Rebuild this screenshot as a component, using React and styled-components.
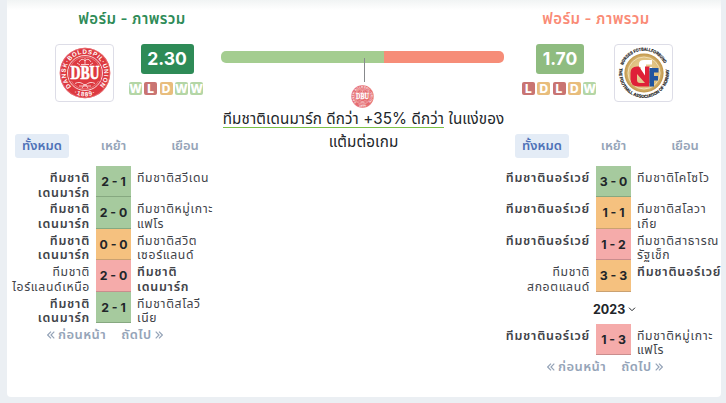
import styled, { createGlobalStyle } from "styled-components";

const results = {
  W: "#b4d6a6",
  L: "#c97472",
  D: "#e8bd7d",
};

const scores = {
  W: ["#a6ca9e", "#86a880"],
  D: ["#f5c17f", "#caa171"],
  L: ["#f5abaa", "#c98d8d"],
};

const denmarkGames = [
  { home: ["ทีมชาติ", "เดนมาร์ก"], away: ["ทีมชาติสวีเดน"], score: "2 - 1", result: "W", own: "home" },
  { home: ["ทีมชาติ", "เดนมาร์ก"], away: ["ทีมชาติหมู่เกาะ", "แฟโร"], score: "2 - 0", result: "W", own: "home" },
  { home: ["ทีมชาติ", "เดนมาร์ก"], away: ["ทีมชาติสวิต", "เซอร์แลนด์"], score: "0 - 0", result: "D", own: "home" },
  { home: ["ทีมชาติ", "ไอร์แลนด์เหนือ"], away: ["ทีมชาติ", "เดนมาร์ก"], score: "2 - 0", result: "L", own: "away" },
  { home: ["ทีมชาติ", "เดนมาร์ก"], away: ["ทีมชาติสโลวี", "เนีย"], score: "2 - 1", result: "W", own: "home" },
];

const norwayGames = [
  { home: ["ทีมชาตินอร์เวย์"], away: ["ทีมชาติโคโซโว"], score: "3 - 0", result: "W", own: "home" },
  { home: ["ทีมชาตินอร์เวย์"], away: ["ทีมชาติสโลวา", "เกีย"], score: "1 - 1", result: "D", own: "home" },
  { home: ["ทีมชาตินอร์เวย์"], away: ["ทีมชาติสาธารณ", "รัฐเช็ก"], score: "1 - 2", result: "L", own: "home" },
  { home: ["ทีมชาติ", "สกอตแลนด์"], away: ["ทีมชาตินอร์เวย์"], score: "3 - 3", result: "D", own: "away" },
];

const norwayOlder = [
  { home: ["ทีมชาตินอร์เวย์"], away: ["ทีมชาติหมู่เกาะ", "แฟโร"], score: "1 - 3", result: "L", own: "home" },
];

const DenmarkCrest = ({ size, faded }) => (
  <svg width={size} height={size} viewBox="0 0 52 52" opacity={faded ? 0.75 : 1}>
    <defs>
      <path id="dbuTop" d="M12.350 39.650 A19.300 19.300 0 1 1 39.650 39.650" />
      <path id="dbuBottom" d="M9.500 42.500 A23.300 23.300 0 0 0 42.500 42.500" />
    </defs>
    <circle cx="26" cy="26" r="25.3" fill="#dd3940" />
    <circle cx="26" cy="26" r="24.8" fill="none" stroke="#f09da0" strokeWidth="0.5" />
    <circle cx="26" cy="26" r="17.500" fill="none" stroke="#fff" strokeWidth="0.8" />
    <circle cx="26" cy="26" r="16" fill="none" stroke="#f09da0" strokeWidth="0.6" />
    <g fill="#fff" fontFamily="Liberation Sans, sans-serif" fontWeight="700" fontSize="6.2">
      <text>
        <textPath href="#dbuTop" textLength="89" lengthAdjust="spacing">
          DANSK·BOLDSPIL·UNION
        </textPath>
      </text>
      <text textAnchor="middle" letterSpacing="0.8">
        <textPath href="#dbuBottom" startOffset="50%">·1889·</textPath>
      </text>
    </g>
    <path
      d="M20 15 q3 -5 6 -1 q3 -4 6 1 M22 17.500 h8 M18 16 l3 2 M34 16 l-3 2 M26 11 v6 M16 36.500 q5 -3 10 2 q5 -5 10 -2 M20 39 h12 M23 41 l3 -4 l3 4"
      fill="none"
      stroke="#fbd5d6"
      strokeWidth="0.9"
    />
    <path d="M10.500 19 h31 v15 h-31 z" fill="#dd3940" />
    <text
      x="26"
      y="31.8"
      textAnchor="middle"
      textLength="29"
      lengthAdjust="spacingAndGlyphs"
      fontFamily="Liberation Serif, serif"
      fontWeight="700"
      fontSize="18"
      fill="#fff"
      stroke="#fff"
      strokeWidth="0.7"
    >
      DBU
    </text>
  </svg>
);

const NorwayCrest = () => (
  <svg width="54" height="54" viewBox="0 0 54 54">
    <defs>
      <radialGradient id="gold">
        <stop offset="0" stopColor="#ecd7a5" />
        <stop offset="0.75" stopColor="#dfc17f" />
        <stop offset="1" stopColor="#c09549" />
      </radialGradient>
      <path id="nffTop" d="M6.100 19.200 A22.300 22.300 0 0 1 47.900 19.200" />
      <path id="nffBottom" d="M2.600 22 A24.900 24.900 0 1 0 51.400 22" />
    </defs>
    <circle cx="27" cy="27" r="19.6" fill="url(#gold)" />
    <circle cx="27" cy="27" r="16" fill="none" stroke="#f1e0b8" strokeWidth="1" />
    <g fill="#1c1c1c" stroke="#1c1c1c" strokeWidth="0.2" fontFamily="Liberation Sans, sans-serif" fontWeight="700" fontSize="4.4">
      <text>
        <textPath href="#nffTop" textLength="52" lengthAdjust="spacingAndGlyphs">
          NORGES FOTBALLFORBUND
        </textPath>
      </text>
      <text>
        <textPath href="#nffBottom" textLength="87" lengthAdjust="spacingAndGlyphs">
          THE FOOTBALL ASSOCIATION OF NORWAY
        </textPath>
      </text>
    </g>
    <path d="M24 29 V21 h-2 v-3 q0 -4 5 -4 h8 v4.500 h-6 v2.500 h6 v4 h-6 v5z" fill="#fff" />
    <path
      d="M20 20.500 q-6.500 0 -6.500 6.500 v6 q0 7.500 8 7.500 h10.500 v-3.500 h-9 q-3 0 -3 -3 v-6 l8 9 h4.500 v-16.500 h-4.500 v9 l-6 -9z"
      fill="#df2038"
    />
    <path d="M32.500 40.500 V22 h9 v4.500 h-4.500 v3.500 h4 v4.500 h-4 v6z" fill="#21559f" />
  </svg>
);

const Chevrons = ({ right }) => (
  <svg width="8" height="8" viewBox="0 0 8 8" fill="none" stroke="currentColor" strokeWidth="1.2">
    {right ? <path d="M.7 .7 L4 4 L.7 7.300 M4 .7 L7.300 4 L4 7.300" /> : <path d="M4 .7 L.7 4 L4 7.300 M7.300 .7 L4 4 L7.300 7.300" />}
  </svg>
);

const Form = ({ items }) => (
  <FormList>
    {items.split("").map((item, i) => (
      <FormBadge key={i} $result={item}>
        {item}
      </FormBadge>
    ))}
  </FormList>
);

const Tabs = () => (
  <TabList>
    <Tab $active>ทั้งหมด</Tab>
    <Tab>เหย้า</Tab>
    <Tab>เยือน</Tab>
  </TabList>
);

const Team = ({ lines, home, own }) => (
  <TeamName $home={home} $own={own}>
    {lines.map((line) => (
      <span key={line}>{line}</span>
    ))}
  </TeamName>
);

const Games = ({ games }) =>
  games.map((game, i) => (
    <Game key={i}>
      <Team lines={game.home} home own={game.own === "home"} />
      <Score $result={game.result}>{game.score}</Score>
      <Team lines={game.away} own={game.own === "away"} />
    </Game>
  ));

const Pager = () => (
  <PagerRow>
    <PageLink>
      <Chevrons />
      ก่อนหน้า
    </PageLink>
    <PageLink>
      ถัดไป
      <Chevrons right />
    </PageLink>
  </PagerRow>
);

const App = () => {
  return (
    <>
      <GlobalStyle />
      <Card>
        <Side>
          <Title $color="#2e8b57">ฟอร์ม - ภาพรวม</Title>
          <Summary $left="40px">
            <Crest>
              <DenmarkCrest size={52} />
            </Crest>
            <Rating>
              <Points $color="#2e8b57" $width="53px">
                2.30
              </Points>
              <Form items="WLDWW" />
            </Rating>
          </Summary>
          <Tabs />
          <Games games={denmarkGames} />
          <Pager />
        </Side>
        <Comparison>
          <Bar>
            <Marker />
          </Bar>
          <DenmarkCrest size={23} faded />
          <Verdict>
            <p>
              <u>ทีมชาติเดนมาร์ก ดีกว่า +35% ดีกว่า</u> ในแง่ของ
            </p>
            <p>แต้มต่อเกม</p>
          </Verdict>
        </Comparison>
        <Side>
          <Title $color="#fa8b76">ฟอร์ม - ภาพรวม</Title>
          <Summary $left="7px">
            <Rating>
              <Points $color="#8fbc80" $width="48px">
                1.70
              </Points>
              <Form items="LDLDW" />
            </Rating>
            <Crest>
              <NorwayCrest />
            </Crest>
          </Summary>
          <Tabs />
          <Games games={norwayGames} />
          <Season>
            2023
            <svg width="8" height="5" viewBox="0 0 8 5" fill="none" stroke="currentColor">
              <path d="M1 .7 L4 3.700 L7 .7" />
            </svg>
          </Season>
          <Games games={norwayOlder} />
          <Pager />
        </Side>
      </Card>
    </>
  );
};

export default App;

const GlobalStyle = createGlobalStyle`
  * {
    box-sizing: border-box;
  }

  body {
    margin: 0;
    height: 403px;
    overflow: hidden;
    background: #ebeff3;
    font-family: Inter, "Noto Sans Thai", "Noto Sans", "Liberation Sans", sans-serif;
    color: #212529;
  }

  p {
    margin: 0;
  }
`;

const Card = styled.main`
  width: 714px;
  height: 397px;
  margin-left: 7px;
  padding-left: 8px;
  display: grid;
  grid-template-columns: 200px 283px 206px;
  column-gap: 6px;
  background: linear-gradient(#f1f4f4, #fff 10px);
  border-radius: 0 0 4px 4px;

  > :last-child {
    margin-left: 5px;
  }
`;

const Side = styled.section`
  min-width: 0;
`;

const Title = styled.h2`
  width: 234px;
  height: 44px;
  margin: 0;
  line-height: 38px;
  text-align: center;
  font-size: 15px;
  font-weight: 600;
  letter-spacing: 0.4px;
  color: ${({ $color }) => $color};

  ${Side}:last-child & {
    width: 162px;
  }
`;

const Summary = styled.div`
  height: 90px;
  padding-left: ${({ $left }) => $left};
  display: flex;
  align-items: flex-start;
  gap: 15px;

  ${Side}:last-child & {
    gap: 18px;
  }
`;

const Crest = styled.div`
  width: 59px;
  height: 58px;
  display: flex;
  align-items: center;
  justify-content: center;
  border: 1px solid #dddde7;
  border-radius: 4px;
`;

const Rating = styled.div`
  width: 74px;
  display: flex;
  flex-direction: column;
  align-items: center;
  gap: 8px;
`;

const Points = styled.div`
  width: ${({ $width }) => $width};
  height: 30px;
  margin-left: 2px;
  line-height: 30px;
  border-radius: 3px;
  text-align: center;
  font-size: 17.500px;
  font-weight: 700;
  color: #fff;
  background: ${({ $color }) => $color};
`;

const FormList = styled.div`
  display: flex;
  gap: 2.250px;
`;

const FormBadge = styled.span`
  width: 13px;
  height: 13px;
  display: flex;
  align-items: center;
  justify-content: center;
  border-radius: 2px;
  font-size: 12px;
  font-weight: 800;
  color: #fff;
  background: ${({ $result }) => results[$result]};
`;

const TabList = styled.nav`
  height: 32px;
  display: grid;
  grid-template-columns: 54px 89px 54px;
`;

const Tab = styled.a`
  height: 24px;
  line-height: 22px;
  border-radius: 3px;
  text-align: center;
  font-size: 13px;
  font-weight: 600;
  white-space: nowrap;
  color: ${({ $active }) => ($active ? "#4f72b8" : "#95a4b8")};
  background: ${({ $active }) => ($active ? "#e4ecf6" : "none")};
`;

const Game = styled.div`
  height: 31.400px;
  display: grid;
  grid-template-columns: 75px 35px 84px;
  grid-template-rows: 100%;
  column-gap: 6px;
`;

const TeamName = styled.div`
  padding-top: 5px;
  display: flex;
  flex-direction: column;
  align-items: ${({ $home }) => ($home ? "flex-end" : "flex-start")};
  line-height: 14.500px;
  font-size: ${({ $own }) => ($own ? "12.5px" : "12.2px")};
  font-weight: ${({ $own }) => ($own ? 600 : 400)};
  letter-spacing: ${({ $own }) => ($own ? "0.75px" : "0.65px")};
  white-space: nowrap;
  color: #414349;
`;

const Score = styled.div`
  height: 100%;
  line-height: 31px;
  text-align: center;
  font-size: 12.250px;
  font-weight: 700;
  white-space: nowrap;
  background: ${({ $result }) => scores[$result][0]};
  border-bottom: 1px solid ${({ $result }) => scores[$result][1]};
`;

const Season = styled.div`
  height: 32px;
  padding-left: 78px;
  display: flex;
  align-items: center;
  gap: 3px;
  padding-top: 3px;
  font-size: 12.500px;
  font-weight: 700;
`;

const PagerRow = styled.div`
  height: 24px;
  padding-left: 32px;
  display: flex;
  align-items: center;
  gap: 15px;
`;

const PageLink = styled.a`
  display: flex;
  align-items: center;
  gap: 3px;
  font-size: 13px;
  font-weight: 600;
  letter-spacing: 0.45px;
  white-space: nowrap;
  color: #95a4b8;
`;

const Comparison = styled.section`
  padding-top: 51px;
  display: flex;
  flex-direction: column;
  align-items: center;

  > svg {
    flex: none;
    margin-top: 22px;
  }
`;

const Bar = styled.div`
  position: relative;
  flex: none;
  width: 283px;
  height: 12px;
  border-radius: 5px;
  background: linear-gradient(90deg, #a4cd90 163px, #f68d78 163px);
`;

const Marker = styled.i`
  position: absolute;
  left: 143px;
  top: 7px;
  width: 1px;
  height: 24px;
  background: #87898c;
`;

const Verdict = styled.div`
  margin-top: -1px;
  padding-left: 2px;
  text-align: center;
  font-size: 15.200px;
  letter-spacing: 0.12px;
  line-height: 23px;
  white-space: nowrap;
  color: #212529;

  u {
    display: inline-block;
    height: 21px;
    line-height: 23px;
    text-decoration: none;
    border-bottom: 1px solid #7abf45;
  }
`;
